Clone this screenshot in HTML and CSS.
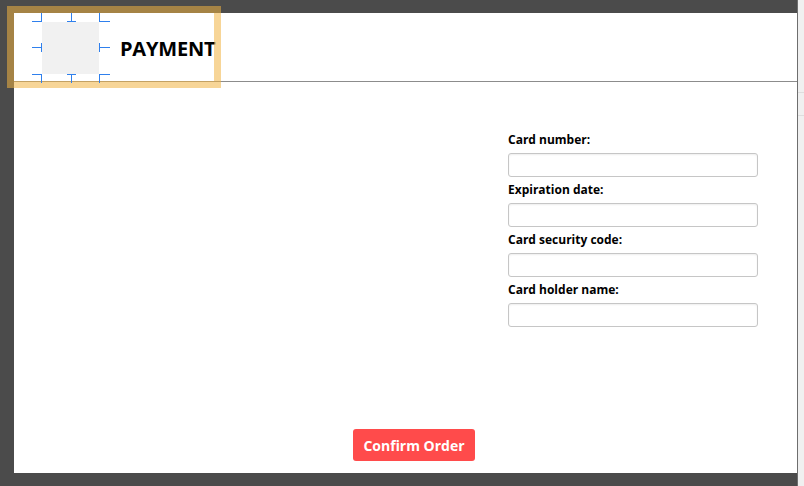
FILE: index.html
```html
<!DOCTYPE html>
<html>
<head>
<meta charset="utf-8">
<link rel="stylesheet" href="styles.css">
</head>
<body>
<div class="app">
  <div class="canvas">
    <div class="window">
      <header class="header">
        <div class="logo"></div>
        <h1 class="title">PAYMENT</h1>
      </header>
      <main class="content">
        <form class="form">
          <label class="label">Card number:</label>
          <div class="input"></div>
          <label class="label">Expiration date:</label>
          <div class="input"></div>
          <label class="label">Card security code:</label>
          <div class="input"></div>
          <label class="label">Card holder name:</label>
          <div class="input"></div>
        </form>
      </main>
      <footer class="footer">
        <button class="confirm" type="button">Confirm Order</button>
      </footer>
    </div>
    <div class="selection"></div>
    <div class="adorners">
      <span class="mark m-tl"></span>
      <span class="mark m-tc"></span>
      <span class="mark m-tr"></span>
      <span class="mark m-ml"></span>
      <span class="mark m-mr"></span>
      <span class="mark m-bl"></span>
      <span class="mark m-bc"></span>
      <span class="mark m-br"></span>
    </div>
  </div>
  <aside class="side">
    <div class="side-row r1"></div>
    <div class="side-row r2"></div>
  </aside>
</div>
</body>
</html>
```

FILE: styles.css
```css
* { box-sizing: border-box; }
html, body { margin: 0; padding: 0; }
body {
  width: 804px;
  height: 486px;
  overflow: hidden;
  background: #4b4b4b;
  font-family: "Open Sans", "Noto Sans", "Liberation Sans", sans-serif;
}
.app {
  display: flex;
  height: 486px;
}
.canvas {
  position: relative;
  flex: 1;
  padding: 13px 0 0 14px;
}
.window {
  width: 783px;
  height: 460px;
  background: #ffffff;
  display: flex;
  flex-direction: column;
}
.header {
  height: 69px;
  border-bottom: 1px solid #8c8c8c;
  display: flex;
  align-items: center;
  padding-left: 28px;
}
.logo {
  width: 57px;
  height: 52px;
  background: #f1f1f1;
  margin-top: 2px;
}
.title {
  margin: 0 0 0 21px;
  font-size: 20px;
  font-weight: 700;
  color: #000;
  letter-spacing: -0.2px;
  margin-top: 2px;
}
.content {
  flex: 1;
  display: flex;
  justify-content: flex-end;
  padding: 45px 39px 0 0;
}
.form {
  width: 250px;
  display: flex;
  flex-direction: column;
}
.label {
  font-size: 12px;
  font-weight: 700;
  color: #000;
  line-height: 26px;
  height: 26px;
}
.input {
  height: 24px;
  border: 1px solid #c6c6c6;
  border-radius: 3px;
  background: #fff;
  box-shadow: inset 0 1px 2px rgba(0, 0, 0, 0.07);
}
.footer {
  display: flex;
  justify-content: center;
  padding: 0 0 12px 17px;
}
.confirm {
  width: 122px;
  height: 32px;
  border: none;
  border-radius: 3px;
  background: #ff4b4b;
  color: #fff;
  font-family: inherit;
  font-size: 14px;
  font-weight: 700;
  padding: 0;
}
.selection {
  position: absolute;
  left: 7px;
  top: 6px;
  width: 214px;
  height: 82px;
  border: 7px solid rgba(240, 178, 66, 0.55);
}
.adorners {
  position: absolute;
  left: 0;
  top: 0;
}
.mark {
  position: absolute;
  width: 10px;
  height: 10px;
}
.m-tl { left: 32px; top: 13px; border-right: 1px solid #2f80ed; border-bottom: 1px solid #2f80ed; width: 10px; height: 9px; }
.m-tr { left: 99px; top: 13px; border-left: 1px solid #2f80ed; border-bottom: 1px solid #2f80ed; width: 11px; height: 9px; }
.m-bl { left: 32px; top: 74px; border-right: 1px solid #2f80ed; border-top: 1px solid #2f80ed; width: 10px; height: 9px; }
.m-br { left: 99px; top: 74px; border-left: 1px solid #2f80ed; border-top: 1px solid #2f80ed; width: 11px; height: 9px; }
.m-tc { left: 67px; top: 13px; width: 9px; height: 9px; border-bottom: 1px solid #2f80ed; }
.m-tc::after { content: ""; position: absolute; left: 4px; top: 0; width: 1px; height: 8px; background: #2f80ed; }
.m-bc { left: 67px; top: 74px; width: 9px; height: 9px; border-top: 1px solid #2f80ed; }
.m-bc::after { content: ""; position: absolute; left: 4px; top: 0; width: 1px; height: 8px; background: #2f80ed; }
.m-ml { left: 32px; top: 43px; width: 10px; height: 9px; border-right: 1px solid #2f80ed; }
.m-ml::after { content: ""; position: absolute; left: 0; top: 4px; width: 9px; height: 1px; background: #2f80ed; }
.m-mr { left: 99px; top: 43px; width: 11px; height: 9px; border-left: 1px solid #2f80ed; }
.m-mr::after { content: ""; position: absolute; left: 0; top: 4px; width: 10px; height: 1px; background: #2f80ed; }
.side {
  width: 7px;
  background: #f0f0f0;
  border-left: 1px solid #6e6e6e;
  padding-top: 92px;
}
.side-row {
  height: 23px;
  border-top: 1px solid #dedede;
}
```
